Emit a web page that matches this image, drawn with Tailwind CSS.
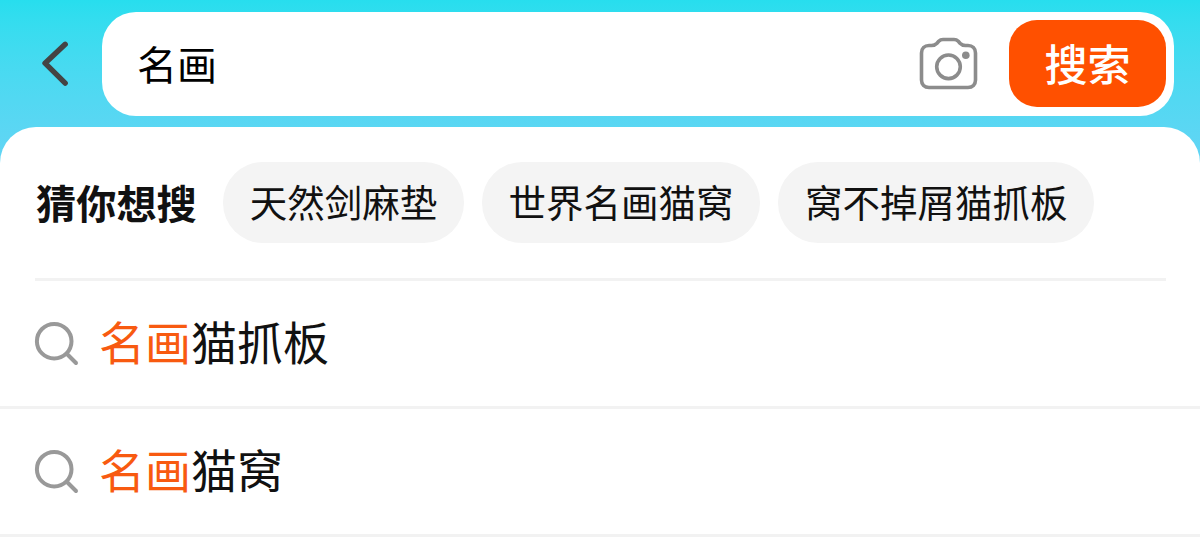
<!DOCTYPE html>
<html lang="zh-CN">
  <head>
    <meta charset="UTF-8" />
    <meta name="viewport" content="width=device-width, initial-scale=1.0" />
    <title>搜索</title>
    <script src="https://cdn.jsdelivr.net/npm/@tailwindcss/browser@4"></script>
  </head>
  <body
    class="h-[544px] overflow-hidden bg-linear-to-b from-[#27deee] to-[#60d5f4] to-[150px] font-['Noto_Sans_CJK_SC',sans-serif] text-[#111]"
  >
    <!-- Search bar -->
    <header class="flex h-[127px] items-start pt-3 pr-[26px]">
      <button class="h-[103px] w-[102px] shrink-0" aria-label="返回">
        <svg class="h-[103px] w-[102px]" viewBox="0 0 102 103" fill="none">
          <path
            d="M65.2 32.3 45 51.2 65.2 71.2"
            stroke="#444"
            stroke-width="5.4"
            stroke-linecap="round"
            stroke-linejoin="round"
          />
        </svg>
      </button>
      <div
        class="flex h-[104px] flex-1 items-center rounded-[34px] bg-white pr-2 pb-px pl-[35px]"
      >
        <span class="flex-1 pb-px text-[40px] leading-[60px] text-black"
          >名画</span
        >
        <svg
          class="mr-[29px] h-[56px] w-[62px]"
          viewBox="0 0 62 56"
          fill="none"
          stroke="#8c8c8c"
          stroke-width="3.6"
          stroke-linejoin="round"
        >
          <path
            d="M11 9.5H13.5C16 9.5 17.5 8.8 19 7.2L20.7 5.3C22 4 23.5 3.5 25 3.5H36C37.5 3.5 39 4 40.3 5.3L42 7.2C43.5 8.8 45 9.5 47.5 9.5H50C54.5 9.5 57.5 12.5 57.5 17V44C57.5 48.5 54.500 51.5 50 51.5H11C6.5 51.5 3.5 48.5 3.5 44V17C3.5 12.5 6.5 9.5 11 9.5Z"
          />
          <circle cx="30.500" cy="30.8" r="11.8" />
          <circle cx="47.8" cy="19.2" r="3.8" fill="#8c8c8c" stroke="none" />
        </svg>
        <button
          class="h-[87px] w-[157px] rounded-[28px] bg-[#ff5000] pb-[3px] text-[43px] leading-[84px] font-medium text-white"
        >
          搜索
        </button>
      </div>
    </header>

    <main class="h-[417px] rounded-t-[36px] bg-white">
      <!-- Suggested searches -->
      <section
        class="mr-[34px] ml-[35px] flex h-[154px] items-start border-b-3 border-[#f2f2f2] pt-[35px]"
      >
        <h2
          class="w-[188px] shrink-0 pl-px text-[40.2px] leading-[79px] font-bold whitespace-nowrap"
        >
          猜你想搜
        </h2>
        <div
          class="flex gap-[18px] text-[37.5px] leading-[77px] whitespace-nowrap"
        >
          <a class="rounded-[40px] bg-[#f4f4f4] px-[26.7px] pb-1">天然剑麻垫</a>
          <a class="rounded-[40px] bg-[#f4f4f4] px-[26.7px] pb-1"
            >世界名画猫窝</a
          >
          <a class="rounded-[40px] bg-[#f4f4f4] px-[26.7px] pb-1"
            >窝不掉屑猫抓板</a
          >
        </div>
      </section>

      <!-- Results -->
      <ul class="text-[46px] leading-[68px]">
        <li
          class="flex h-[128px] items-center border-b-3 border-[#f2f2f2] pl-[34px]"
        >
          <svg
            class="mr-[19px] size-[46px]"
            viewBox="0 0 46 46"
            fill="none"
            stroke="#999"
            stroke-width="4"
            stroke-linecap="round"
          >
            <circle cx="20.2" cy="20.2" r="17.3" />
            <path d="M33.5 33.5 42 42" />
          </svg>
          <span class="pb-2 text-[#f85a10]">名画</span
          ><span class="pb-2">猫抓板</span>
        </li>
        <li
          class="flex h-[128px] items-center border-b-3 border-[#f2f2f2] pl-[34px]"
        >
          <svg
            class="mr-[19px] size-[46px]"
            viewBox="0 0 46 46"
            fill="none"
            stroke="#999"
            stroke-width="4"
            stroke-linecap="round"
          >
            <circle cx="20.2" cy="20.2" r="17.3" />
            <path d="M33.5 33.5 42 42" />
          </svg>
          <span class="pb-2 text-[#f85a10]">名画</span
          ><span class="pb-2">猫窝</span>
        </li>
      </ul>
    </main>
  </body>
</html>
